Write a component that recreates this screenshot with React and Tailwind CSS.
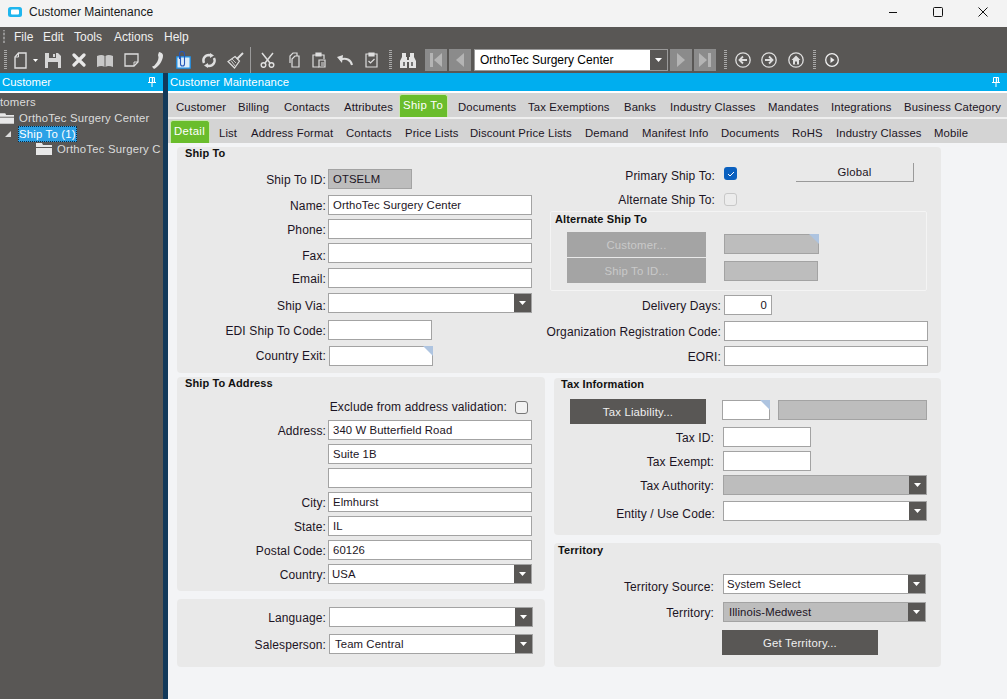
import React from "react";

const ic = "#dedede";

function Grip({ className }) {
  return (
    <svg viewBox="0 0 3 20" className={className}>
      <line x1="1.5" y1="0" x2="1.5" y2="20" stroke="#a9a9a9" strokeWidth="3" strokeDasharray="1 1" />
    </svg>
  );
}

function NavBox({ className, dir }) {
  return (
    <div className={"w-[22px] h-[22px] shrink-0 bg-[#8b8b8b] flex items-center justify-center " + className}>
      <svg viewBox="0 0 16 16" className="w-[16px] h-[16px]">
        {dir === "first" && <path d="M2 1h3v14H2zM14 1v14L6 8z" fill="#b4b4b4" />}
        {dir === "prev" && <path d="M12 1v14L4 8z" fill="#b4b4b4" />}
        {dir === "next" && <path d="M4 1v14l8-7z" fill="#b4b4b4" />}
        {dir === "last" && <path d="M2 1v14l8-7zM11 1h3v14h-3z" fill="#b4b4b4" />}
      </svg>
    </div>
  );
}

function Caret() {
  return (
    <svg viewBox="0 0 7 4" className="w-[7px] h-[4px]">
      <path d="M0 0h7L3.500 4z" fill="#fff" />
    </svg>
  );
}

function Toolbar() {
  return (
    <div className="h-[26px] flex items-center">
      <Grip className="ml-[4px] w-[3px] h-[20px] shrink-0" />
      <svg viewBox="0 0 13 17" className="ml-[7px] w-[13px] h-[17px] shrink-0" fill="none" stroke={ic} strokeWidth="1.400">
        <path d="M4.500 1H12v15H1V5z" />
        <path d="M4.500 1v4H1" strokeWidth="1" />
      </svg>
      <svg viewBox="0 0 5 3" className="ml-[6px] w-[5px] h-[3px] shrink-0"><path d="M0 0h5L2.500 3z" fill="#fff" /></svg>
      <svg viewBox="0 0 16 15" className="ml-[7px] w-[16px] h-[15px] shrink-0">
        <path d="M0 0h13l3 3v12H0z" fill="#d6d6d6" />
        <path d="M4 0h7v5H4zM3 9h10v6H3z" fill="#595755" />
        <path d="M8 1h2v3H8z" fill="#d6d6d6" />
      </svg>
      <svg viewBox="0 0 14 14" className="ml-[11px] w-[14px] h-[14px] shrink-0" stroke="#e8e8e8" strokeWidth="3.200" strokeLinecap="round">
        <path d="M2 2l10 10M12 2L2 12" />
      </svg>
      <svg viewBox="0 0 16 13" className="ml-[11px] w-[16px] h-[13px] shrink-0">
        <path d="M0 2c3-1.500 6-1.500 7.500 0V13C6 11.800 3 11.800 0 13zM16 2c-3-1.500-6-1.500-7.500 0V13c1.500-1.200 4.500-1.200 7.500 0z" fill="#c8c8c8" />
      </svg>
      <svg viewBox="0 0 15 14" className="ml-[11px] w-[15px] h-[14px] shrink-0" fill="none" stroke={ic} strokeWidth="1.300">
        <path d="M1 1h13v8l-4 4H1z" />
        <path d="M14 9h-4v4" strokeWidth="1" />
      </svg>
      <svg viewBox="0 0 11 17" className="ml-[13px] w-[11px] h-[17px] shrink-0">
        <path d="M7 0c2.500.5 4 1.500 4 3.500 0 5-4 11-9 13.500L0 14.800c1-.5 2.500-1 3-2 2-2 3.500-5 3.500-7.500L6 3z" fill="#e2e2e2" />
      </svg>
      <svg viewBox="0 0 15 18" className="ml-[13px] w-[15px] h-[18px] shrink-0">
        <path d="M.8 5.800h13.400v11.400H.8z" fill="#dcecf8" stroke="#1e90e8" strokeWidth="1.300" />
        <path d="M3.500 8V3a2.500 2.500 0 0 1 5 0v10a2 2 0 0 1-4 0V5" fill="none" stroke="#2456b8" strokeWidth="1.100" />
      </svg>
      <svg viewBox="0 0 16 15" className="ml-[10px] w-[16px] h-[15px] shrink-0" fill="none" stroke={ic} strokeWidth="2.400">
        <path d="M3 10C1 6 4 2 8 2l2 .5M13 5c2 4-1 8-5 8l-2-.5" />
        <path d="M9 0l4 2.500L9 5zM7 10l-4 2.500L7 15z" fill={ic} stroke="none" />
      </svg>
      <svg viewBox="0 0 17 17" className="ml-[10px] w-[17px] h-[17px] shrink-0" fill="none" stroke={ic} strokeWidth="1.200">
        <path d="M10 7l6-6" strokeWidth="2" />
        <path d="M8 4.500l4.500 4.500-5 7L1 9.500z" />
        <path d="M5 7l4 4M4 8.500L8 14" strokeWidth=".8" />
      </svg>
      <div className="ml-[6px] w-[1px] h-[26px] bg-[#9a9a9a] shrink-0" />
      <svg viewBox="0 0 15 16" className="ml-[9px] w-[15px] h-[16px] shrink-0" fill="none" stroke={ic} strokeWidth="1.500">
        <path d="M2 1l8 10M13 1L5 11" />
        <circle cx="3.500" cy="13" r="2.300" />
        <circle cx="11.500" cy="13" r="2.300" />
      </svg>
      <svg viewBox="0 0 13 16" className="ml-[12px] w-[13px] h-[16px] shrink-0" fill="none" stroke={ic} strokeWidth="1.200">
        <path d="M3 11V4l3-3h4v3" />
        <path d="M5 15V7l3-3h4v11z" />
      </svg>
      <svg viewBox="0 0 14 16" className="ml-[12px] w-[14px] h-[16px] shrink-0" fill="none" stroke={ic} strokeWidth="1.200">
        <path d="M4 3H1v12h6M9 3h3v4" />
        <path d="M4 1h5v3H4z" fill={ic} />
        <path d="M7 8h6v7H7zM9 11h3M9 13h3" />
      </svg>
      <svg viewBox="0 0 16 12" className="ml-[11px] w-[16px] h-[12px] shrink-0" fill="none" stroke={ic} strokeWidth="2">
        <path d="M15 11C14 6 9 3 3 6" />
        <path d="M0 3l6-2-1 8z" fill={ic} stroke="none" />
      </svg>
      <svg viewBox="0 0 13 16" className="ml-[12px] w-[13px] h-[16px] shrink-0" fill="none" stroke={ic} strokeWidth="1.200">
        <path d="M4 2H1v13h11V2H9" />
        <path d="M4 1h5v3H4z" fill={ic} />
        <path d="M3.500 9l2 2 4-4" />
      </svg>
      <Grip className="ml-[11px] w-[3px] h-[20px] shrink-0" />
      <svg viewBox="0 0 16 15" className="ml-[8px] w-[16px] h-[15px] shrink-0">
        <path d="M2 0h4v4h1v3h2V4h1V0h4v4l2 4v7H9V9H7v6H0V8l2-4z" fill="#e4e4e4" />
        <path d="M3 9h2v4H3zM11 9h2v4h-2z" fill="#777" />
      </svg>
      <NavBox className="ml-[9px]" dir="first" />
      <NavBox className="ml-[2px]" dir="prev" />
      <div className="ml-[3px] w-[194px] h-[22px] shrink-0 flex bg-white border border-[#9a9a9a] text-[12px] text-black">
        <div className="flex-1 pl-[5px] leading-[21px]">OrthoTec Surgery Center</div>
        <div className="w-[17px] bg-[#595755] flex items-center justify-center"><Caret /></div>
      </div>
      <NavBox className="ml-[2px]" dir="next" />
      <NavBox className="ml-[2px]" dir="last" />
      <Grip className="ml-[8px] w-[3px] h-[20px] shrink-0" />
      <svg viewBox="0 0 16 16" className="ml-[8px] w-[16px] h-[16px] shrink-0" fill="none" stroke={ic} strokeWidth="1.300">
        <circle cx="8" cy="8" r="7.200" />
        <path d="M12 8H5M8 4.500L4.500 8 8 11.500" strokeWidth="1.800" />
      </svg>
      <svg viewBox="0 0 16 16" className="ml-[10px] w-[16px] h-[16px] shrink-0" fill="none" stroke={ic} strokeWidth="1.300">
        <circle cx="8" cy="8" r="7.200" />
        <path d="M4 8h7M8 4.500L11.500 8 8 11.500" strokeWidth="1.800" />
      </svg>
      <svg viewBox="0 0 16 16" className="ml-[11px] w-[16px] h-[16px] shrink-0" fill="none" stroke={ic} strokeWidth="1.300">
        <circle cx="8" cy="8" r="7.200" />
        <path d="M8 3.500L3.500 8H5v4.500h6V8h1.500z" fill={ic} stroke="none" />
        <path d="M7 9.500h2v3H7z" fill="#595755" stroke="none" />
      </svg>
      <Grip className="ml-[9px] w-[3px] h-[20px] shrink-0" />
      <svg viewBox="0 0 14 14" className="ml-[9px] w-[14px] h-[14px] shrink-0">
        <circle cx="7" cy="7" r="6.300" fill="none" stroke="#f0f0f0" strokeWidth="1.300" />
        <path d="M5.500 4l4 3-4 3z" fill="#f0f0f0" />
      </svg>
    </div>
  );
}

function Pin() {
  return (
    <svg viewBox="0 0 8 10" className="w-[8px] h-[10px]" fill="none" stroke="#fff" strokeWidth="1">
      <path d="M1.500 .5h5v5h-5zM0 5.500h8M4 5.500V10" />
      <path d="M4.500 1v4" strokeWidth="1.400" />
    </svg>
  );
}

function Folder({ className }) {
  return (
    <svg viewBox="0 0 16 12" className={className}>
      <path d="M0 0h6l1 2h9v2H0z" fill="#e8e8e8" />
      <path d="M0 5h16v7H0z" fill="#e8e8e8" />
    </svg>
  );
}

function Tree() {
  return (
    <div className="w-[163px] shrink-0 overflow-hidden bg-[#595755] text-[#dcdcdc]">
      <div className="h-[18px] bg-[#00aeef] flex items-center justify-between pl-[2px] pr-[7px] text-white">
        <span>Customer</span>
        <Pin />
      </div>
      <div className="h-[2px] bg-white" />
      <div className="h-[15px] mt-[2px] leading-[15px] whitespace-nowrap tracking-[0.2px]">tomers</div>
      <div className="h-[16px] flex items-center whitespace-nowrap tracking-[0.2px]">
        <Folder className="w-[14px] h-[11px] shrink-0" />
        <span className="ml-[5px]">OrthoTec Surgery Center</span>
      </div>
      <div className="h-[16px] flex items-center whitespace-nowrap tracking-[0.2px]">
        <svg viewBox="0 0 6 6" className="ml-[5px] w-[6px] h-[6px] shrink-0"><path d="M6 0v6H0z" fill="#dcdcdc" /></svg>
        <span className="ml-[7px] px-[1px] h-[16px] leading-[16px] bg-[#2ba1e6] text-white outline-1 outline-dotted outline-[#0b2a44] -outline-offset-1">Ship To (1)</span>
      </div>
      <div className="h-[14px] flex items-center whitespace-nowrap tracking-[0.2px]">
        <Folder className="ml-[36px] w-[16px] h-[12px] shrink-0" />
        <span className="ml-[5px]">OrthoTec Surgery C</span>
      </div>
    </div>
  );
}

const tabs1 = [
  ["Customer", "w-[62px]"], ["Billing", "w-[46px]"], ["Contacts", "w-[60px]"], ["Attributes", "w-[56px]"],
  ["Ship To", "w-[58px]", "w-[49px]"], ["Documents", "w-[70px]"], ["Tax Exemptions", "w-[96px]"], ["Banks", "w-[46px]"],
  ["Industry Classes", "w-[98px]"], ["Mandates", "w-[63px]"], ["Integrations", "w-[73px]"], ["Business Category", "w-[102px]"],
];
const tabs2 = [
  ["Detail", "w-[48px]", "w-[40px]"], ["List", "w-[32px]"], ["Address Format", "w-[95px]"], ["Contacts", "w-[59px]"],
  ["Price Lists", "w-[65px]"], ["Discount Price Lists", "w-[115px]"], ["Demand", "w-[57px]"], ["Manifest Info", "w-[79px]"],
  ["Documents", "w-[71px]"], ["RoHS", "w-[44px]"], ["Industry Classes", "w-[98px]"], ["Mobile", "w-[40px]"],
];

function TabRow({ items, className }) {
  return (
    <div className={"flex items-end whitespace-nowrap text-[#1c1424] tracking-[0.12px] bg-[#d4d4d4] " + className}>
      {items.map(([t, w, active]) =>
        active ? (
          <div key={t} className={w + " shrink-0"}>
            <div className={"-ml-[1px] pl-[3px] h-[23px] pt-[4px] bg-[#6abd2c] text-white tracking-[0.35px] border border-b-0 border-[#c9e6b0] rounded-t-[3px] leading-[13px] " + active}>{t}</div>
          </div>
        ) : (
          <div key={t} className={w + " shrink-0 h-[23px] leading-[27px]"}>{t}</div>
        )
      )}
    </div>
  );
}

function Corner() {
  return <div className="absolute -top-[1px] -right-[1px] w-[10px] h-[10px] bg-[#aec4e0] [clip-path:polygon(0_0,100%_0,100%_100%)]" />;
}

function Box({ w = "w-[204px]", gray, corner, dd, children, right, pl = "pl-[4px]", h = "h-[20px]" }) {
  return (
    <div className={"relative shrink-0 flex border border-[#a3a3a3] " + h + " " + w + " " + (gray ? "bg-[#bdbdbd]" : "bg-white")}>
      <div className={"flex-1 pr-[4px] leading-[19px] text-[#1c1424] tracking-[0.1px] whitespace-nowrap " + pl + (right ? " text-right" : "")}>{children}</div>
      {dd && <div className="w-[17px] bg-[#595755] flex items-center justify-center"><Caret /></div>}
      {corner && <Corner />}
    </div>
  );
}

function Label({ w, className = "", children }) {
  return <div className={"shrink-0 flex justify-end whitespace-nowrap text-[12px] text-[#1c1424] tracking-[0.12px] " + w + " " + className}>{children}</div>;
}

function Row({ label, labelW = "w-[149px]", lp = "pt-[4px]", gap = "ml-[2px]", className = "", ...box }) {
  return (
    <div className={"flex items-start " + className}>
      <Label w={labelW} className={lp}>{label}</Label>
      <div className={gap}><Box {...box} /></div>
    </div>
  );
}

function Check({ checked }) {
  return checked ? (
    <div className="w-[13px] h-[13px] shrink-0 rounded-[3px] bg-[#0a60bf] flex items-center justify-center">
      <svg viewBox="0 0 8 6" className="w-[8px] h-[6px]" fill="none" stroke="#fff" strokeWidth="1"><path d="M1 3l2 2 4-4" /></svg>
    </div>
  ) : (
    <div className="w-[13px] h-[13px] shrink-0 rounded-[3px] border border-[#777] bg-[#f2f2f2]" />
  );
}

function Panel({ className = "", children }) {
  return <div className={"bg-[#e9e9e9] rounded-[4px] " + className}>{children}</div>;
}

function Title({ className = "", children }) {
  return <div className={"font-bold text-[11px] leading-[12px] text-[#111] tracking-[0.1px] " + className}>{children}</div>;
}

function Btn({ className, children }) {
  return <div className={"shrink-0 flex items-center justify-center tracking-[0.2px] " + className}>{children}</div>;
}

function ShipTo() {
  return (
    <Panel className="h-[226px] flex">
      <div className="w-[355px] shrink-0">
        <Title className="pl-[8px] h-[22px] leading-[10px]">Ship To</Title>
        <Row label="Ship To ID:" w="w-[84px]" gray>OTSELM</Row>
        <Row className="mt-[6px]" label="Name:">OrthoTec Surgery Center</Row>
        <Row className="mt-[4px]" label="Phone:" />
        <Row className="mt-[4px]" label="Fax:" lp="pt-[6px]" />
        <Row className="mt-[5px]" label="Email:" />
        <Row className="mt-[5px]" label="Ship Via:" lp="pt-[6px]" dd />
        <Row className="mt-[7px]" label="EDI Ship To Code:" w="w-[104px]" />
        <Row className="mt-[6px]" label="Country Exit:" lp="pt-[3px]" gap="ml-[3px]" w="w-[104px]" corner />
      </div>
      <div className="ml-[18px] w-[378px] shrink-0">
        <div className="mt-[16px] h-[19px] flex items-start">
          <Label w="w-[165px]" className="pt-[6px]">Primary Ship To:</Label>
          <div className="ml-[9px] mt-[4px]"><Check checked /></div>
          <Btn className="ml-[59px] w-[118px] h-[19px] border-r border-b border-[#9a9a9a] text-[#1c1424]">Global</Btn>
        </div>
        <div className="mt-[11px] h-[13px] flex items-start">
          <Label w="w-[165px]">Alternate Ship To:</Label>
          <div className="ml-[9px]"><div className="w-[13px] h-[13px] rounded-[3px] border border-[#c8c8c8] bg-[#ececec]" /></div>
        </div>
        <div className="mt-[5px] h-[80px] w-[377px] border border-[#f4f4f4] rounded-[2px]">
          <Title className="pl-[4px] pt-[1px] h-[20px]">Alternate Ship To</Title>
          <div className="flex">
            <div className="ml-[16px] flex flex-col gap-[1px]">
              <Btn className="w-[139px] h-[25px] bg-[#a4a4a4] text-[#c9c9c9]">Customer...</Btn>
              <Btn className="w-[139px] h-[25px] bg-[#a4a4a4] text-[#c9c9c9]">Ship To ID...</Btn>
            </div>
            <div className="ml-[18px]">
              <div className="mt-[2px]"><Box w="w-[95px]" gray corner /></div>
              <div className="mt-[7px]"><Box w="w-[94px]" gray /></div>
            </div>
          </div>
        </div>
        <Row className="mt-[4px]" label="Delivery Days:" labelW="w-[171px]" gap="ml-[3px]" w="w-[48px]" right>0</Row>
        <Row className="mt-[6px]" label="Organization Registration Code:" labelW="w-[171px]" gap="ml-[3px]" />
        <Row className="mt-[5px]" label="EORI:" labelW="w-[171px]" gap="ml-[3px]" />
      </div>
    </Panel>
  );
}

function Address() {
  return (
    <Panel className="h-[214px]">
      <Title className="pl-[8px] h-[24px]">Ship To Address</Title>
      <div className="h-[13px] flex items-start">
        <Label w="w-[330px]" className="leading-[12px]">Exclude from address validation:</Label>
        <div className="ml-[8px]"><Check /></div>
      </div>
      <Row className="mt-[6px]" label="Address:">340 W Butterfield Road</Row>
      <Row className="mt-[4px]" label="">Suite 1B</Row>
      <Row className="mt-[4px]" label="" />
      <Row className="mt-[4px]" label="City:">Elmhurst</Row>
      <Row className="mt-[4px]" label="State:">IL</Row>
      <Row className="mt-[4px]" label="Postal Code:">60126</Row>
      <Row className="mt-[4px]" label="Country:" pl="pl-[3px]" dd>USA</Row>
    </Panel>
  );
}

function Sales() {
  return (
    <Panel className="h-[68px] mt-[8px] pt-[8px]">
      <Row label="Language:" gap="ml-[3px]" dd />
      <Row className="mt-[7px]" label="Salesperson:" gap="ml-[3px]" pl="pl-[5px]" dd>Team Central</Row>
    </Panel>
  );
}

function Tax() {
  return (
    <Panel className="h-[157px] mt-[1px]">
      <Title className="pl-[7px] h-[21px]">Tax Information</Title>
      <div className="flex h-[25px]">
        <Btn className="ml-[16px] w-[136px] h-[25px] bg-[#595755] text-[#f0f0f0]">Tax Liability...</Btn>
        <div className="ml-[16px] mt-[1px]"><Box w="w-[48px]" corner /></div>
        <div className="ml-[8px] mt-[1px]"><Box w="w-[149px]" gray /></div>
      </div>
      <Row className="mt-[3px]" label="Tax ID:" labelW="w-[160px]" gap="ml-[9px]" w="w-[88px]" />
      <Row className="mt-[4px]" label="Tax Exempt:" labelW="w-[160px]" gap="ml-[9px]" w="w-[88px]" />
      <Row className="mt-[4px]" label="Tax Authority:" labelW="w-[160px]" gap="ml-[9px]" gray dd />
      <Row className="mt-[6px]" label="Entity / Use Code:" lp="pt-[6px]" labelW="w-[161px]" gap="ml-[8px]" dd />
    </Panel>
  );
}

function Territory() {
  return (
    <Panel className="h-[124px] mt-[8px]">
      <Title className="pl-[4px] h-[31px] pt-[1px]">Territory</Title>
      <Row label="Territory Source:" lp="pt-[6px]" labelW="w-[160px]" gap="ml-[9px]" w="w-[203px]" pl="pl-[3px]" dd>System Select</Row>
      <Row className="mt-[8px]" label="Territory:" labelW="w-[160px]" gap="ml-[9px]" w="w-[203px]" pl="pl-[5px]" gray dd>Illinois-Medwest</Row>
      <Btn className="mt-[8px] ml-[168px] w-[156px] h-[25px] bg-[#595755] text-[#f0f0f0]">Get Territory...</Btn>
    </Panel>
  );
}

export default function App() {
  return (
    <div className="w-[1007px] h-[699px] overflow-hidden flex flex-col bg-[#f3f4f6] font-['Liberation_Sans',sans-serif] text-[11.33px] leading-[14px]">
      <div className="h-[27px] shrink-0 bg-[#f3f3f3] flex items-center pr-[2px] pb-[3px] text-[12px] text-[#1a1a1a]">
        <svg viewBox="0 0 14 10" className="ml-[8px] w-[14px] h-[10px] shrink-0">
          <rect width="14" height="10" rx="2.500" fill="#1fb6ee" />
          <rect x="3" y="2.500" width="8" height="5" rx="1" fill="#fff" />
        </svg>
        <span className="ml-[7px]">Customer Maintenance</span>
        <div className="ml-auto flex">
          <div className="w-[45px] flex justify-center"><svg viewBox="0 0 10 10" className="w-[10px] h-[10px]"><path d="M1 5.500h8" stroke="#111" /></svg></div>
          <div className="w-[45px] flex justify-center"><svg viewBox="0 0 10 10" className="w-[10px] h-[10px]"><rect x=".5" y=".5" width="9" height="9" rx="1" fill="none" stroke="#111" /></svg></div>
          <div className="w-[45px] flex justify-center"><svg viewBox="0 0 10 10" className="w-[10px] h-[10px]"><path d="M.5 .5l9 9M9.500 .5l-9 9" stroke="#111" /></svg></div>
        </div>
      </div>

      <div className="h-[46px] shrink-0 bg-[#595755] text-[#f0f0f0] text-[12px]">
        <div className="h-[20px] flex items-center">
          <Grip className="ml-[3px] w-[2px] h-[14px] shrink-0" />
          <div className="ml-[9px] w-[29px]">File</div>
          <div className="w-[31px]">Edit</div>
          <div className="w-[40px]">Tools</div>
          <div className="w-[50px]">Actions</div>
          <div>Help</div>
        </div>
        <Toolbar />
      </div>

      <div className="flex-1 flex min-h-0">
        <Tree />
        <div className="w-[5px] shrink-0 bg-[#12395a]" />
        <div className="flex-1 min-w-0 flex flex-col">
          <div className="h-[18px] shrink-0 bg-[#00aeef] flex items-center justify-between pl-[2px] pr-[7px] text-white tracking-[0.1px]">
            <span>Customer Maintenance</span>
            <Pin />
          </div>
          <div className="h-[2px] shrink-0 bg-white" />
          <TabRow items={tabs1} className="h-[24px] pl-[8px]" />
          <div className="h-[2px] shrink-0 bg-[#efefef]" />
          <TabRow items={tabs2} className="h-[24px] pl-[3px]" />
          <div className="pt-[4px] pl-[9px] w-[773px]">
            <ShipTo />
            <div className="flex gap-[9px] mt-[4px]">
              <div className="w-[368px] shrink-0">
                <Address />
                <Sales />
              </div>
              <div className="w-[387px] shrink-0">
                <Tax />
                <Territory />
              </div>
            </div>
          </div>
        </div>
      </div>
    </div>
  );
}
